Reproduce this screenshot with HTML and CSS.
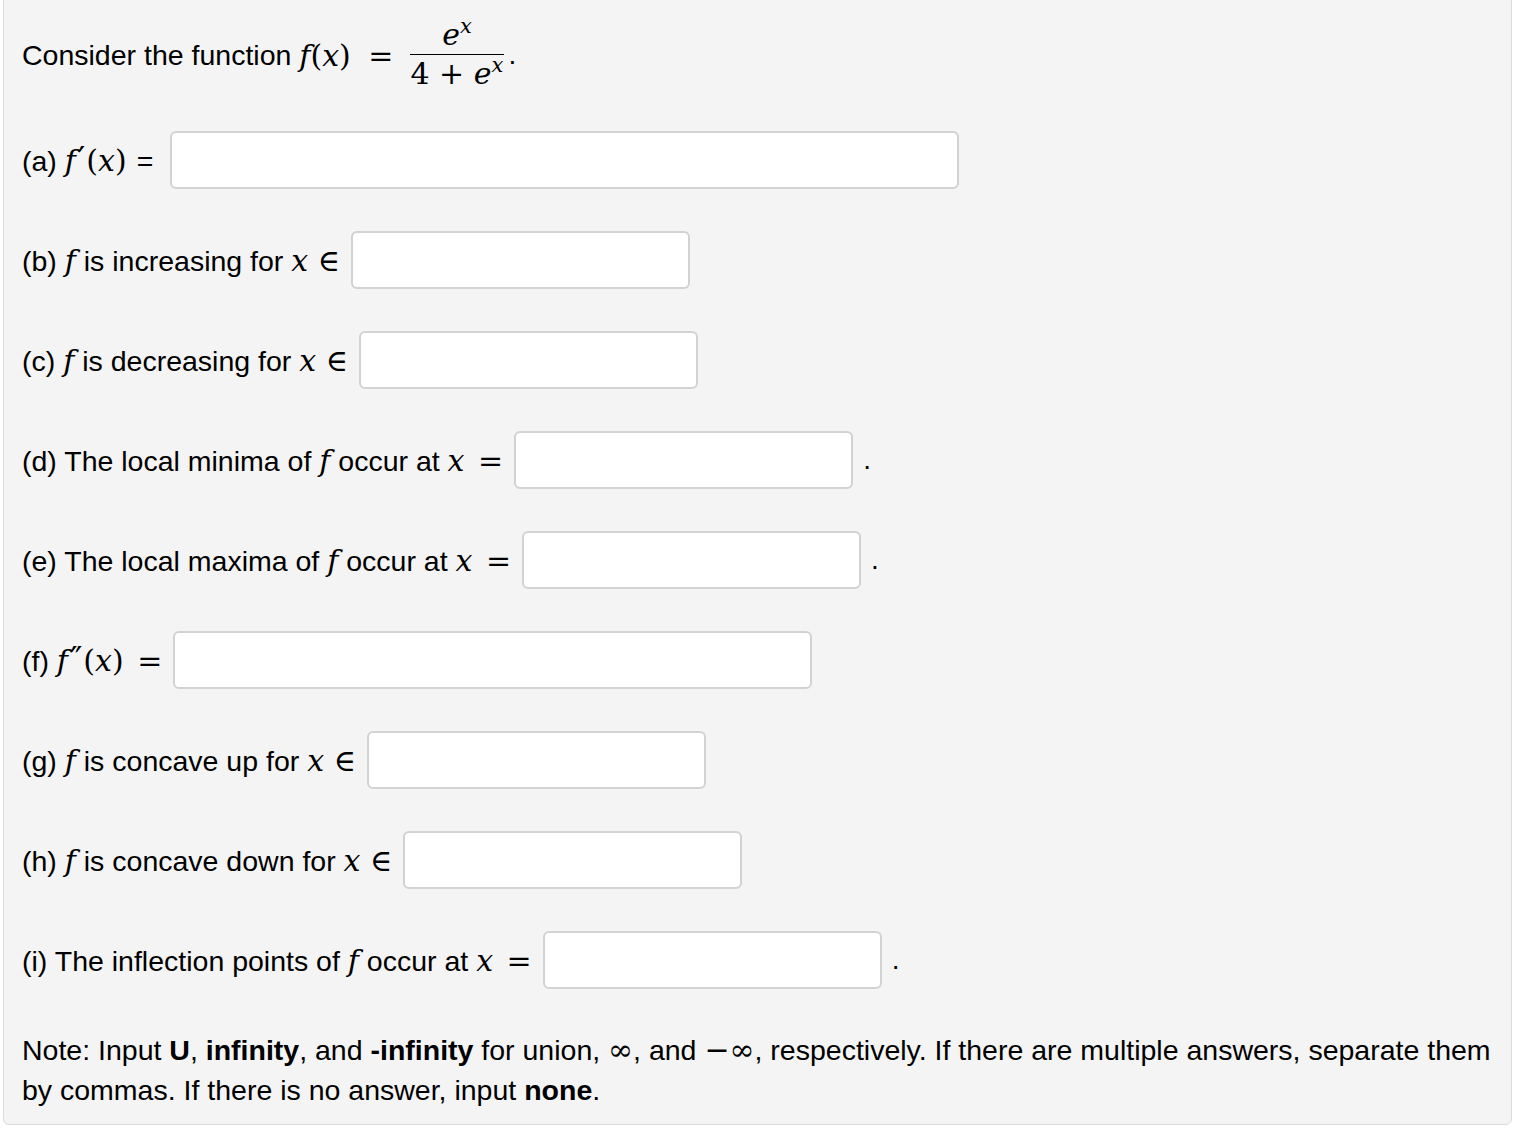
FILE: index.html
```html
<!DOCTYPE html>
<html lang="en">
<head>
    <meta charset="UTF-8">
    <title>Derivative Problem</title>
    <link rel="stylesheet" href="styles.css">
</head>
<body>
    <div class="problem">
        <div class="intro">
            Consider the function
            <span class="math">f<span class="up">(</span>x<span class="up">)</span> <span class="rel">=</span></span>
            <span class="frac">
                <span class="num"><span class="math">e<sup>x</sup></span></span>
                <span class="den"><span class="math"><span class="up">4 + </span>e<sup>x</sup></span></span>
            </span><span class="dot">.</span>
        </div>

        <div class="row">
            <span class="label">(a) <span class="math">f<span class="up prime">′</span><span class="up">(</span>x<span class="up">)</span></span> <span class="eq">=</span></span>
            <input type="text" class="answer wide">
        </div>

        <div class="row">
            <span class="label">(b) <span class="math">f</span> is increasing for <span class="math">x <span class="up">∈</span></span></span>
            <input type="text" class="answer short">
        </div>

        <div class="row">
            <span class="label">(c) <span class="math">f</span> is decreasing for <span class="math">x <span class="up">∈</span></span></span>
            <input type="text" class="answer short">
        </div>

        <div class="row">
            <span class="label">(d) The local minima of <span class="math">f</span> occur at <span class="math">x <span class="rel">=</span></span></span>
            <input type="text" class="answer short"><span class="dot">.</span>
        </div>

        <div class="row">
            <span class="label">(e) The local maxima of <span class="math">f</span> occur at <span class="math">x <span class="rel">=</span></span></span>
            <input type="text" class="answer short"><span class="dot">.</span>
        </div>

        <div class="row">
            <span class="label">(f) <span class="math">f<span class="up prime">″</span><span class="up">(</span>x<span class="up">)</span> <span class="rel">=</span></span></span>
            <input type="text" class="answer medium">
        </div>

        <div class="row">
            <span class="label">(g) <span class="math">f</span> is concave up for <span class="math">x <span class="up">∈</span></span></span>
            <input type="text" class="answer short">
        </div>

        <div class="row">
            <span class="label">(h) <span class="math">f</span> is concave down for <span class="math">x <span class="up">∈</span></span></span>
            <input type="text" class="answer short">
        </div>

        <div class="row">
            <span class="label">(i) The inflection points of <span class="math">f</span> occur at <span class="math">x <span class="rel">=</span></span></span>
            <input type="text" class="answer short"><span class="dot">.</span>
        </div>

        <p class="note">
            Note: Input <b>U</b>, <b>infinity</b>, and <b>-infinity</b> for union, <span class="sym">∞</span>, and <span class="sym">−∞</span>, respectively. If there are multiple answers, separate them by commas. If there is no answer, input <b>none</b>.
        </p>
    </div>
</body>
</html>
```

FILE: styles.css
```css
body {
    margin: 0;
    background: #fff;
    color: #000;
    font-family: "Liberation Sans", Arial, sans-serif;
    font-size: 28.5px;
}

.problem {
    margin: -2px 2px 2px 3px;
    padding: 18px 18px 14px 18px;
    background: #f4f4f4;
    border: 1px solid #dcdcdc;
    border-radius: 0 0 6px 6px;
}

/* ===== Math text ===== */
.math {
    font-family: "DejaVu Serif", "Liberation Serif", serif;
    font-style: italic;
    font-size: 30px;
    white-space: nowrap;
}

.math sup {
    font-size: 0.7em;
    vertical-align: 0.55em;
    line-height: 0;
}

.up {
    font-style: normal;
}

.prime {
    font-size: 1.1em;
    line-height: 0;
    margin: 0 1px 0 2px;
}

.rel {
    font-style: normal;
    margin: 0 0 0 4px;
}

.eq {
    margin-left: 2px;
    margin-right: 6px;
}

.sym {
    font-family: "DejaVu Serif", serif;
    font-size: 30px;
    line-height: 0;
}

/* ===== Intro line with fraction ===== */
.intro {
    display: flex;
    align-items: center;
    gap: 8px;
    height: 76px;
    margin-bottom: 38px;
}

.intro .rel {
    margin: 0 6px 0 8px;
}

.frac {
    display: inline-flex;
    flex-direction: column;
    align-items: center;
    margin-left: 2px;
}

.num {
    padding: 0 4px 2px;
    line-height: 34px;
}

.den {
    border-top: 1.5px solid #000;
    padding: 0 1px;
    line-height: 38px;
}

.dot {
    margin-left: -4px;
    font-size: 28px;
}

/* ===== Answer rows ===== */
.row {
    display: flex;
    align-items: center;
    height: 58px;
    margin-bottom: 42px;
}

.label {
    margin-right: 11px;
    white-space: nowrap;
}

.answer {
    box-sizing: border-box;
    height: 58px;
    background: #fff;
    border: 2px solid #d2d2d2;
    border-radius: 6px;
    font-size: 24px;
    padding: 0 10px;
}

.row .dot {
    margin-left: 10px;
}

.wide {
    width: 789px;
}

.medium {
    width: 639px;
}

.short {
    width: 339px;
}

/* ===== Note ===== */
.note {
    margin: -1px 0 0;
    line-height: 40px;
}

.note b {
    font-weight: bold;
}
```
